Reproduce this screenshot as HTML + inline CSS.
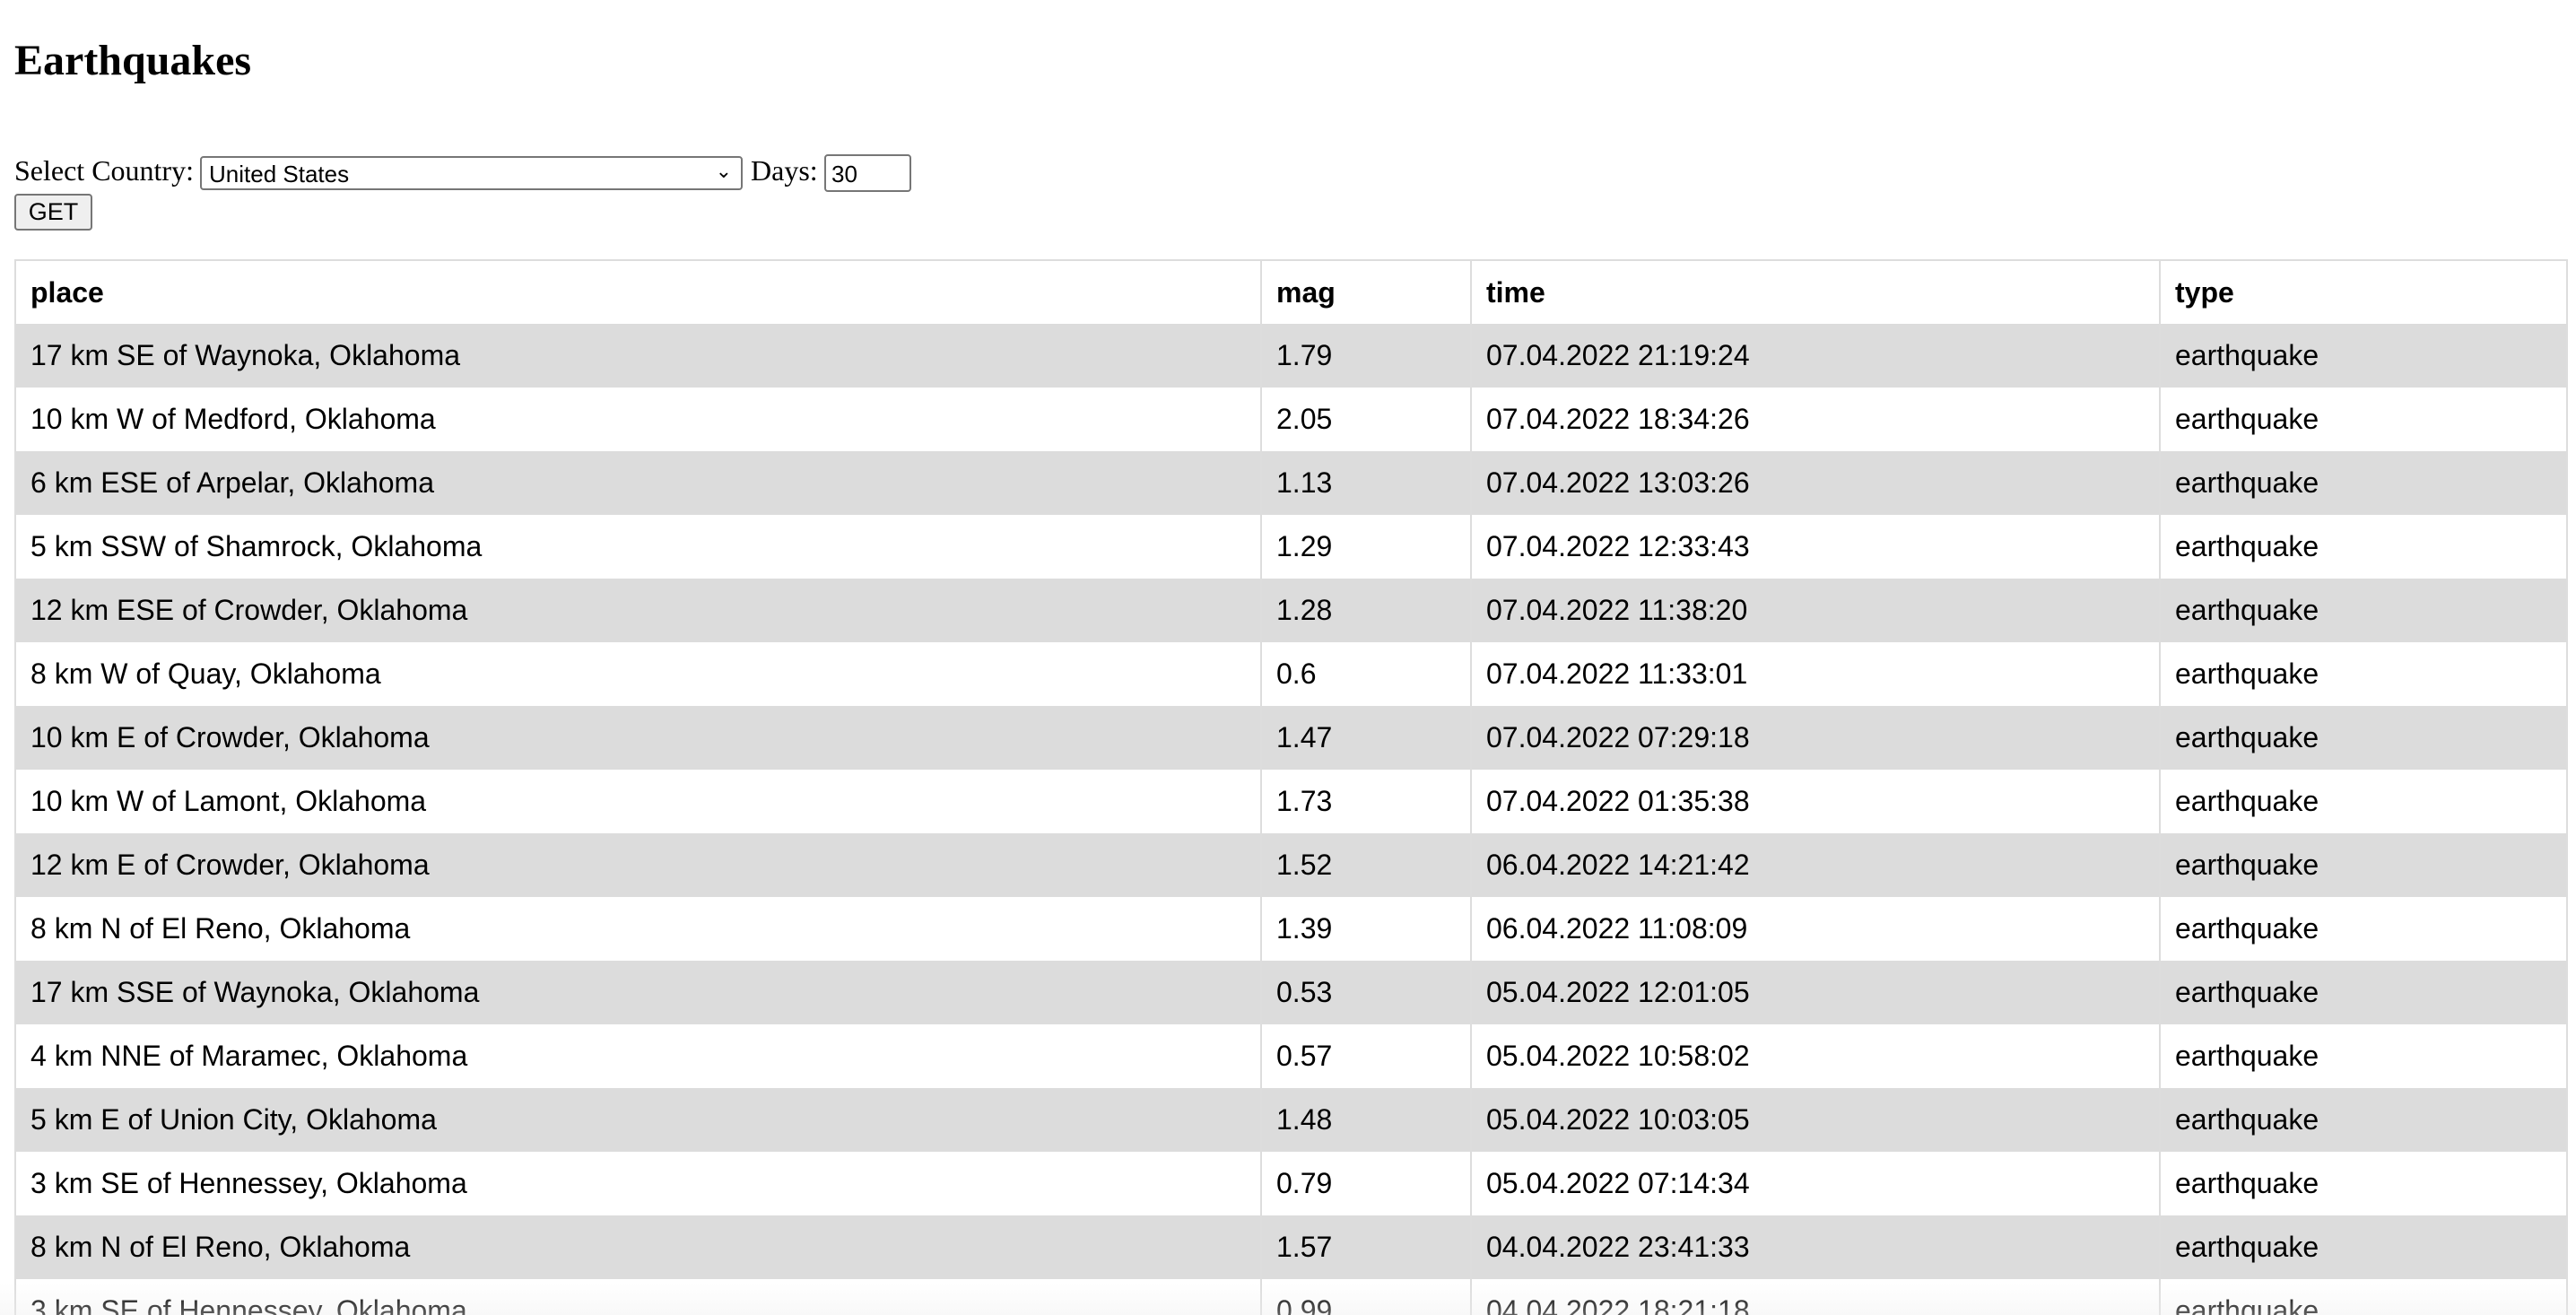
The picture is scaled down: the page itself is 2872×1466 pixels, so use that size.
<!DOCTYPE html>
<html><head><meta charset="utf-8"><style>
body{margin:0;width:2872px;height:1466px;overflow:hidden;background:#fff;font-family:"Liberation Serif",serif;color:#000;position:relative}
h2{position:absolute;left:16px;top:40px;margin:0;font-size:48px;font-weight:bold}
.lbl{position:absolute;font-size:32px;top:172px}
.sel{position:absolute;left:223px;top:174px;width:605px;height:38px;border:2px solid #767676;border-radius:4px;box-sizing:border-box;font-family:"Liberation Sans",sans-serif;font-size:26px;padding:3px 8px;line-height:30px}
.sel span.ar{position:absolute;right:10px;top:0px;font-size:22px}
.inp{position:absolute;left:919px;top:172px;width:97px;height:42px;border:2px solid #767676;border-radius:4px;box-sizing:border-box;font-family:"Liberation Sans",sans-serif;font-size:26px;padding:5px 6px}
.btn{position:absolute;left:16px;top:216px;width:87px;height:41px;border:2px solid #767676;border-radius:4px;background:#efefef;box-sizing:border-box;font-family:"Liberation Sans",sans-serif;font-size:27px;text-align:center;line-height:36px}
.wrap{position:absolute;left:16px;top:289px;width:2847px;height:1177px;overflow:hidden}
table{width:2847px;border-collapse:collapse;font-family:"Liberation Sans",sans-serif;font-size:32px;border:2px solid #ddd}
td,th{height:71px;padding:0 0 0 16px;text-align:left;border-left:2px solid #ddd;box-sizing:border-box}
th{font-weight:bold}
tr:nth-child(even) td{background:#dcdcdc}
.fade{position:absolute;left:0;top:1430px;width:2872px;height:36px;background:linear-gradient(#fff0,#eeeeee66)}
</style></head><body>
<h2>Earthquakes</h2>
<div class="lbl" style="left:16px">Select Country:</div>
<div class="sel">United States<span class="ar">&#8964;</span></div>
<div class="lbl" style="left:837px">Days:</div>
<div class="inp">30</div>
<div class="btn">GET</div>
<div class="wrap">
<table>
<tr><th style="width:1389px">place</th><th style="width:234px">mag</th><th style="width:768px">time</th><th>type</th></tr>
<tr><td>17 km SE of Waynoka, Oklahoma</td><td>1.79</td><td>07.04.2022 21:19:24</td><td>earthquake</td></tr>
<tr><td>10 km W of Medford, Oklahoma</td><td>2.05</td><td>07.04.2022 18:34:26</td><td>earthquake</td></tr>
<tr><td>6 km ESE of Arpelar, Oklahoma</td><td>1.13</td><td>07.04.2022 13:03:26</td><td>earthquake</td></tr>
<tr><td>5 km SSW of Shamrock, Oklahoma</td><td>1.29</td><td>07.04.2022 12:33:43</td><td>earthquake</td></tr>
<tr><td>12 km ESE of Crowder, Oklahoma</td><td>1.28</td><td>07.04.2022 11:38:20</td><td>earthquake</td></tr>
<tr><td>8 km W of Quay, Oklahoma</td><td>0.6</td><td>07.04.2022 11:33:01</td><td>earthquake</td></tr>
<tr><td>10 km E of Crowder, Oklahoma</td><td>1.47</td><td>07.04.2022 07:29:18</td><td>earthquake</td></tr>
<tr><td>10 km W of Lamont, Oklahoma</td><td>1.73</td><td>07.04.2022 01:35:38</td><td>earthquake</td></tr>
<tr><td>12 km E of Crowder, Oklahoma</td><td>1.52</td><td>06.04.2022 14:21:42</td><td>earthquake</td></tr>
<tr><td>8 km N of El Reno, Oklahoma</td><td>1.39</td><td>06.04.2022 11:08:09</td><td>earthquake</td></tr>
<tr><td>17 km SSE of Waynoka, Oklahoma</td><td>0.53</td><td>05.04.2022 12:01:05</td><td>earthquake</td></tr>
<tr><td>4 km NNE of Maramec, Oklahoma</td><td>0.57</td><td>05.04.2022 10:58:02</td><td>earthquake</td></tr>
<tr><td>5 km E of Union City, Oklahoma</td><td>1.48</td><td>05.04.2022 10:03:05</td><td>earthquake</td></tr>
<tr><td>3 km SE of Hennessey, Oklahoma</td><td>0.79</td><td>05.04.2022 07:14:34</td><td>earthquake</td></tr>
<tr><td>8 km N of El Reno, Oklahoma</td><td>1.57</td><td>04.04.2022 23:41:33</td><td>earthquake</td></tr>
<tr><td>3 km SE of Hennessey, Oklahoma</td><td>0.99</td><td>04.04.2022 18:21:18</td><td>earthquake</td></tr>
</table>
</div>
<div class="fade"></div>
</body></html>
